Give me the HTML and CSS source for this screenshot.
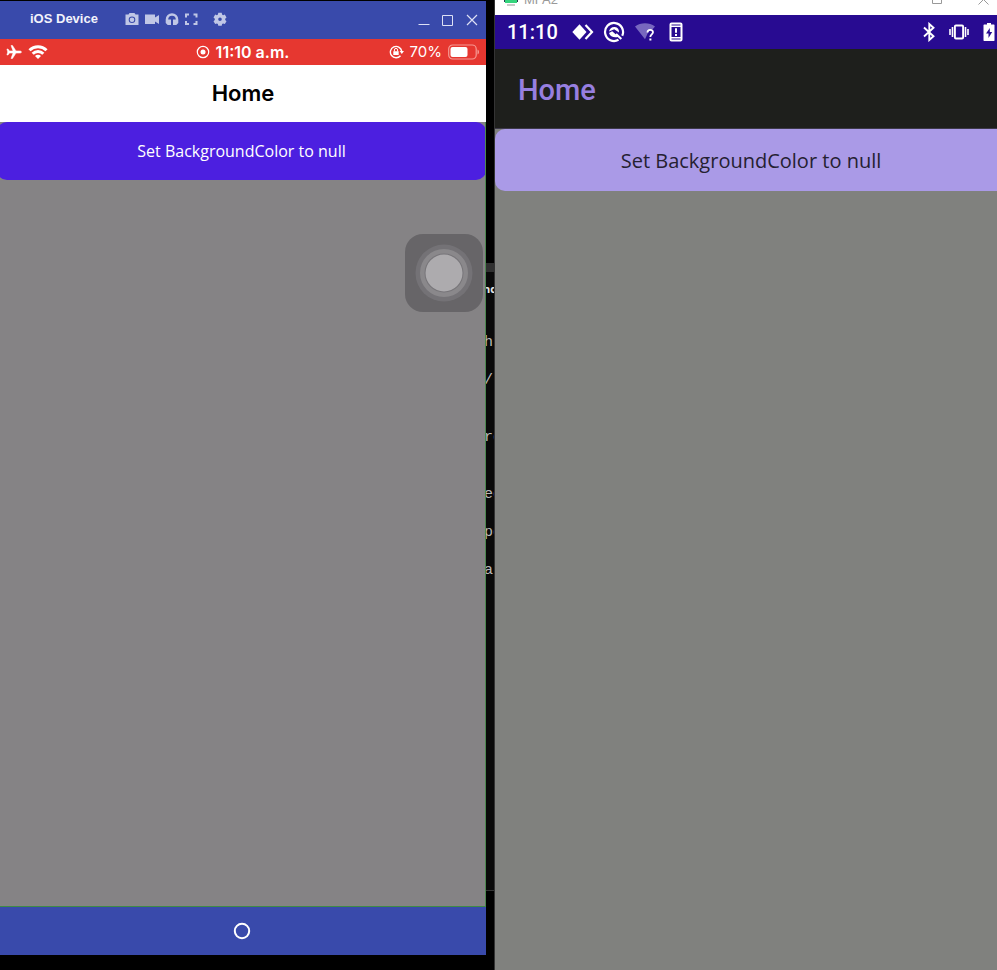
FILE: index.html
```
<!DOCTYPE html>
<html lang="en">
<head>
<meta charset="utf-8">
<title>Device screens</title>
<link rel="stylesheet" href="styles.css">
</head>
<body>
<main class="desktop">
  <section class="ios" aria-label="iOS Device">
    <header class="ios-window">
      <span class="ios-window-title">iOS Device</span>
      <div class="tools">
        <button type="button" aria-label="Take photo"><svg width="14" height="14" viewBox="0 0 14 14"><path fill="currentColor" fill-rule="evenodd" d="M4.500 1h5l1 1.500H13.500V13H.500V2.500h3zM7 4.500a3.300 3.300 0 1 0 0 6.600 3.300 3.300 0 0 0 0-6.600zm0 1a2.300 2.300 0 1 1 0 4.600 2.300 2.300 0 0 1 0-4.600z"/><circle cx="7" cy="7.800" r="1.600" fill="currentColor"/></svg></button>
        <button type="button" aria-label="Record video"><svg width="16" height="14" viewBox="0 0 16 14"><path fill="currentColor" d="M1 2.500h10v3L15 3v9l-4-2.500V12H1z"/></svg></button>
        <button type="button" aria-label="Audio"><svg width="14" height="14" viewBox="0 0 14 14"><path fill="currentColor" d="M7 1.200A6.300 6.300 0 0 0 .700 7.500V11l2 2H6V7.500H3.200a3.800 3.800 0 0 1 7.600 0H8V13h3.300l2-2V7.500A6.300 6.300 0 0 0 7 1.200z"/></svg></button>
        <button type="button" aria-label="Full screen"><svg width="14" height="14" viewBox="0 0 14 14"><path fill="none" stroke="currentColor" stroke-width="2" d="M2 5.500V2.500h3M9.500 2.500h3v3M12.500 9v3h-3M5 12H2V9"/></svg></button>
        <button type="button" class="settings" aria-label="Settings"><svg width="14" height="14" viewBox="0 0 14 14"><path fill="currentColor" fill-rule="evenodd" d="M5.300.800h3.400l.4 1.800 1 .6 1.700-.6 1.700 2.900-1.300 1.200v1.300l1.300 1.200-1.700 2.900-1.700-.6-1 .6-.4 1.700H5.300l-.4-1.700-1-.6-1.700.6L.500 9.200 1.800 8V6.700L.500 5.500l1.700-2.900 1.700.6 1-.6zM7 5.500a1.800 1.800 0 1 0 0 3.600 1.800 1.800 0 0 0 0-3.600z"/></svg></button>
      </div>
      <div class="window-controls">
        <button type="button" aria-label="Minimize"><svg width="12" height="12" viewBox="0 0 12 12"><path stroke="currentColor" d="M.5 10.500h11"/></svg></button>
        <button type="button" aria-label="Maximize"><svg width="12" height="12" viewBox="0 0 12 12"><path fill="none" stroke="currentColor" d="M.5 1.500h10v10h-10z"/></svg></button>
        <button type="button" aria-label="Close"><svg width="12" height="12" viewBox="0 0 12 12"><path stroke="currentColor" stroke-width="1.200" d="M1 1l10 10M11 1L1 11"/></svg></button>
      </div>
    </header>

    <div class="ios-status">
      <div class="status-left">
        <svg width="16" height="14" viewBox="0 0 16 14"><path fill="currentColor" stroke="currentColor" stroke-width=".5" d="M15.500 7c0-.7-1-1.100-2-1.100H10L6.500.5H5L7 5.900H3.500L2 4H.9L1.700 7 .9 10H2l1.500-1.900H7L5 13.500h1.500L10 8.100h3.500c1 0 2-.4 2-1.100z"/></svg>
        <svg width="20" height="14" viewBox="0 0 20 14"><path fill="none" stroke="currentColor" stroke-width="3" d="M1.500 5.200a12 12 0 0 1 17 0M4.700 8.800a7.500 7.500 0 0 1 10.600 0"/><path fill="currentColor" d="M10 14l-3-3a4.200 4.200 0 0 1 6 0z"/></svg>
      </div>
      <div class="status-time">
        <svg width="14" height="14" viewBox="0 0 14 14"><circle cx="7" cy="7" r="5.700" fill="none" stroke="currentColor" stroke-width="1.200"/><circle cx="7" cy="7" r="2.500" fill="currentColor"/></svg>
        <span>11:10 a.m.</span>
      </div>
      <div class="status-right">
        <svg width="15" height="14" viewBox="0 0 15 14"><path fill="none" stroke="currentColor" stroke-width="1.400" d="M11.500 10.700A5.700 5.700 0 1 1 12.700 6"/><path fill="currentColor" d="M10.600 6H15l-2.200 3zM4.300 6.300h5.400V10H4.300z"/><path fill="none" stroke="currentColor" d="M5.400 6.500V5a1.600 1.600 0 0 1 3.200 0v1.500"/></svg>
        <span class="battery-level">70%</span>
        <svg width="31" height="16" viewBox="0 0 31 16"><rect x=".7" y="1" width="27.500" height="14" rx="4" fill="none" stroke="#f69a94" stroke-width="1.200"/><rect x="2.500" y="3" width="17" height="10" rx="2" fill="currentColor"/><path fill="#f69a94" d="M29.500 5.500c2 1 2 4 0 5z"/></svg>
      </div>
    </div>

    <h1 class="ios-nav">Home</h1>

    <div class="ios-content">
      <button type="button" class="ios-action">Set BackgroundColor to null</button>
      <button type="button" class="assistive" aria-label="Assistive touch"><svg width="78" height="78" viewBox="0 0 78 78"><circle cx="39" cy="39" r="28.500" fill="#747276"/><circle cx="39" cy="39" r="24" fill="#8a888b"/><circle cx="39" cy="39" r="19.500" fill="#777579"/><circle cx="39" cy="39" r="18.500" fill="#adabae"/></svg></button>
    </div>

    <footer class="ios-home">
      <button type="button" aria-label="Home"><svg width="18" height="18" viewBox="0 0 18 18"><circle cx="9" cy="9" r="7.200" fill="none" stroke="currentColor" stroke-width="2"/></svg></button>
    </footer>
  </section>

  <div class="editor">
    <div class="editor-tab"></div>
    <p class="editor-title">nd</p>
    <div class="editor-code">
      <span>ht</span>
      <span>/.</span>
      <span class="block">re</span>
      <span class="block">ec</span>
      <span>pe</span>
      <span>al</span>
    </div>
  </div>

  <section class="android" aria-label="Android device">
    <header class="android-window">
      <svg width="14" height="14" viewBox="0 0 14 14"><path fill="#263b50" d="M0 0h14v10H0z"/><path fill="#34d47c" d="M1 0h12v11H1z"/><path fill="#c8c8c8" d="M3 12h8v2H3z"/></svg>
      <span>MFA2</span>
      <div class="android-controls">
        <button type="button" aria-label="Maximize"><svg width="11" height="11" viewBox="0 0 11 11"><path fill="none" stroke="currentColor" d="M.5.5h9v9h-9z"/></svg></button>
        <button type="button" aria-label="Close"><svg width="11" height="11" viewBox="0 0 11 11"><path stroke="currentColor" d="M.5.500l10 10M10.500.500l-10 10"/></svg></button>
      </div>
    </header>

    <div class="android-status">
      <span class="android-time">11:10</span>
      <div class="notifications">
        <svg width="22" height="18" viewBox="0 0 22 18"><path fill="currentColor" d="M7.500 1.200l7 7.800-7 7.800L.3 9z"/><path fill="none" stroke="currentColor" stroke-width="2.200" d="M13.500 2l6.500 7-6.500 7"/></svg>
        <svg width="22" height="22" viewBox="0 0 22 22"><path fill="none" stroke="currentColor" stroke-width="2.200" d="M15.500 18.800A9 9 0 1 1 19.200 14.800"/><path fill="currentColor" d="M6 10.500C6.500 7.500 9 5.700 11.800 6c2.900.3 4.500 2.600 4.200 5.500L11.200 8.300zM6 12l3.200-1.800 6.300 5.600c-4 1.300-8.300.2-9.500-3.800z"/><path stroke="currentColor" stroke-width="2.200" d="M13 13l5.300 5"/></svg>
        <svg width="24" height="20" viewBox="0 0 24 20"><path fill="#7767bf" d="M1 4.500a17 17 0 0 1 20 0l-3.500 4H15l-4 8.800z"/><path fill="none" stroke="currentColor" stroke-width="1.800" d="M13.500 10.500c0-3.500 5.500-3.400 5.500-.2 0 2-2.700 2.200-2.700 4.700"/><path fill="currentColor" d="M15.400 16.500h2v2h-2z"/></svg>
        <svg width="18" height="20" viewBox="0 0 18 20"><rect x="3.500" y="1.500" width="11" height="17" rx="1" fill="none" stroke="currentColor" stroke-width="2"/><path fill="none" stroke="currentColor" stroke-width="1.600" d="M3 4.300h12M3 15.700h12"/><path fill="currentColor" d="M8 6.300h2v4.500H8zM8 12h2v2H8z"/></svg>
      </div>
      <div class="system-icons">
        <svg width="12" height="20" viewBox="0 0 12 20"><path fill="none" stroke="currentColor" stroke-width="1.900" d="M1 5.500l9.500 8.700L6.300 18V2l4.200 3.800L1 14.500"/></svg>
        <svg width="20" height="16" viewBox="0 0 20 16"><rect x="5.900" y="1.500" width="8.200" height="13" rx="1" fill="none" stroke="currentColor" stroke-width="1.900"/><path stroke="currentColor" stroke-width="1.600" d="M3.500 3v10M1 5v6M16.500 3v10M19 5v6"/></svg>
        <svg width="12" height="20" viewBox="0 0 12 20"><path fill="currentColor" fill-rule="evenodd" d="M4 1h4v1.500h3l.5.500v15.500l-.5.500H1l-.5-.5V3l.5-.5h3zM6.800 6L3 11.500h2.500V16l3.700-6H6.800z"/></svg>
      </div>
    </div>

    <h1 class="android-bar">Home</h1>
    <div class="android-content">
      <button type="button" class="android-action">Set BackgroundColor to null</button>
    </div>
  </section>
</main>
</body>
</html>
```

FILE: styles.css
```
* {
  box-sizing: border-box;
}

body {
  margin: 0;
  background: #000;
  font-family: "Open Sans", sans-serif;
}

button {
  display: block;
  padding: 0;
  border: 0;
  background: none;
  color: inherit;
  font: inherit;
}

svg {
  display: block;
  flex: none;
}

h1,
p {
  margin: 0;
}

.desktop {
  display: grid;
  grid-template-columns: 486fr 9px 502fr;
  min-height: 100vh;
}

/* iOS device */

.ios {
  display: flex;
  flex-direction: column;
  min-width: 0;
  padding: 1px 0 15px;
}

.ios-window {
  display: flex;
  align-items: center;
  height: 38px;
  padding: 0 8px 2px 30px;
  background: #394aab;
  color: #dde1f5;
}

.ios-window-title {
  width: 95px;
  color: #f2f3fb;
  font: bold 13px/18px "Liberation Sans", sans-serif;
}

.tools {
  display: flex;
  gap: 5px;
  color: #c0c7e6;
}

.tools .settings {
  margin-left: 10px;
}

.window-controls {
  display: flex;
  gap: 12px;
  margin-left: auto;
  padding-top: 2px;
}

.ios-status {
  display: grid;
  grid-template-columns: 1fr auto 1fr;
  align-items: center;
  height: 26px;
  padding: 0 7px 0 6px;
  background: #e63730;
  color: #fff;
  font: 16px/20px Inter, sans-serif;
}

.status-left,
.status-time,
.status-right {
  display: flex;
  align-items: center;
  gap: 6px;
}

.status-time {
  font-weight: 600;
}

.status-right {
  justify-content: flex-end;
}

.battery-level {
  font-size: 15px;
}

.ios-nav {
  height: 57px;
  background: #fff;
  color: #000;
  font: 600 22px/57px Inter, sans-serif;
  text-align: center;
}

.ios-content {
  flex: 1;
  overflow: hidden;
  border-right: 1px solid #4d8750;
  border-bottom: 1px solid #3f8b45;
  background: #858385;
}

.ios-action {
  width: calc(100% + 4px);
  height: 58px;
  margin-left: -3px;
  border-radius: 10px;
  background: #4c1fe0;
  color: #fff;
  font-size: 16px;
}

.assistive {
  margin: 54px 2px 0 auto;
  border-radius: 18px;
  background: #676568;
}

.ios-home {
  display: flex;
  align-items: center;
  justify-content: center;
  height: 48px;
  padding-right: 2px;
  background: #394aab;
  color: #fff;
}

/* Editor strip between the devices */

.editor {
  display: flex;
  flex-direction: column;
  overflow: hidden;
  padding: 263px 0 79px;
  border-right: 1px solid #343434;
  color: #b9b9b9;
}

.editor-tab {
  flex: none;
  height: 9px;
  background: #303030;
}

.editor-title {
  padding-top: 8px;
  background: #0a0a0a;
  color: #e8e8e8;
  font: bold 11px/18px "Open Sans", sans-serif;
  text-indent: -3px;
}

.editor-code {
  display: flex;
  flex: 1;
  flex-direction: column;
  padding-top: 35px;
  border-bottom: 1px solid #343434;
  background: #0a0a0a;
  font: 15px/19px "Liberation Mono", monospace;
  text-indent: -2px;
}

.editor-code span {
  margin-bottom: 19px;
}

.editor-code .block {
  margin-top: 19px;
}

/* Android device */

.android {
  display: flex;
  flex-direction: column;
  min-width: 0;
  overflow: hidden;
}

.android-window {
  display: flex;
  align-items: flex-end;
  gap: 6px;
  height: 15px;
  padding: 0 8px 9px 9px;
  background: #fff;
  color: #999;
  font: 13px/13px "Liberation Sans", sans-serif;
}

.android-controls {
  display: flex;
  gap: 35px;
  margin-left: auto;
  padding-bottom: 1px;
}

.android-status {
  display: flex;
  align-items: center;
  height: 34px;
  padding: 0 2px 0 12px;
  background: #280b91;
  color: #fff;
}

.android-time {
  width: 65px;
  font: 500 20px/24px Roboto, sans-serif;
}

.notifications {
  display: flex;
  align-items: center;
  gap: 9px;
}

.system-icons {
  display: flex;
  align-items: center;
  gap: 14px;
  margin-left: auto;
}

.android-bar {
  height: 80px;
  padding-left: 23px;
  border-bottom: 1px solid #3d3949;
  background: #1e1f1c;
  color: #977fe0;
  font: 500 29px/82px Roboto, sans-serif;
}

.android-content {
  flex: 1;
  background: #80817e;
}

.android-action {
  width: calc(100% + 10px);
  height: 62px;
  border-radius: 10px;
  background: #aa9ae7;
  color: #252131;
  font-size: 20px;
}
```
